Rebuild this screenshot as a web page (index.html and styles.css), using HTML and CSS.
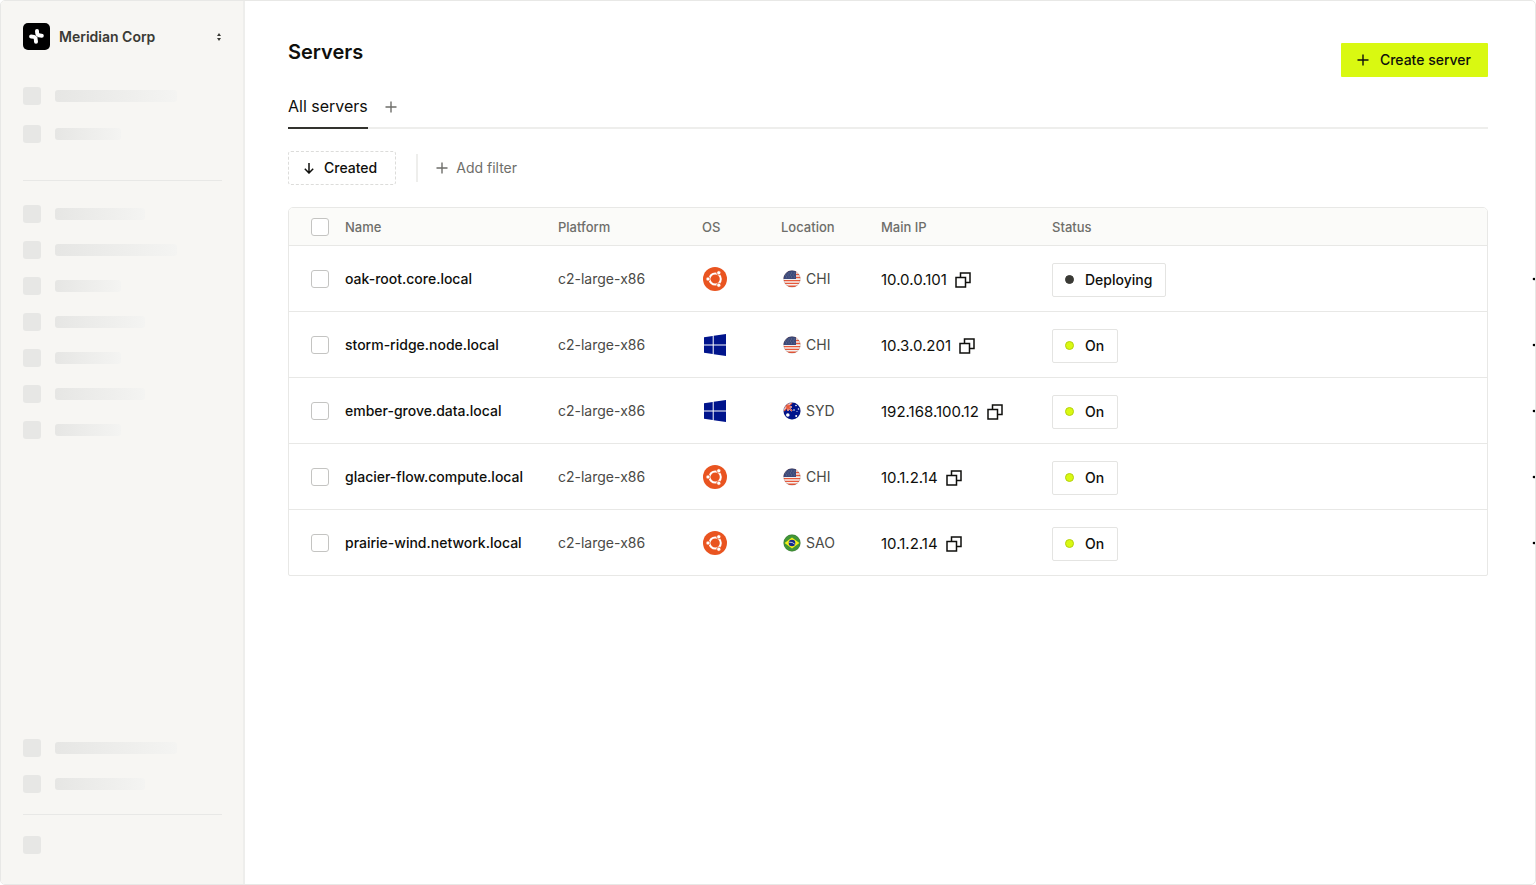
FILE: index.html
```
<!DOCTYPE html>
<html lang="en">
<head>
    <meta charset="UTF-8">
    <meta name="viewport" content="width=device-width, initial-scale=1">
    <title>Servers</title>
    <link rel="stylesheet" href="styles.css">
</head>
<body>
    <!-- shared icons -->
    <svg class="sprite" aria-hidden="true">
        <symbol id="plus" viewBox="0 0 12 12">
            <path d="M6 .5v11M.5 6h11" fill="none" stroke="currentColor" stroke-width="1.4"/>
        </symbol>
        <symbol id="copy" viewBox="0 0 16 16">
            <path d="M1 5.5h9.5V15H1zM5.5 5.5V1H15v9.5h-4.5" fill="none" stroke="currentColor" stroke-width="1.5"/>
        </symbol>
        <symbol id="more" viewBox="0 0 16 4">
            <circle cx="2" cy="2" r="1.3"/><circle cx="8" cy="2" r="1.3"/><circle cx="14" cy="2" r="1.3"/>
        </symbol>
        <symbol id="ubuntu" viewBox="0 0 24 24">
            <circle cx="12" cy="12" r="12" fill="#e95420"/>
            <circle cx="12.2" cy="12" r="5.6" fill="none" stroke="#fff" stroke-width="2"/>
            <g fill="#fff" stroke="#e95420" stroke-width=".8">
                <circle cx="5" cy="12" r="2.1"/>
                <circle cx="15.8" cy="5.8" r="2.1"/>
                <circle cx="15.8" cy="18.2" r="2.1"/>
            </g>
        </symbol>
        <symbol id="windows" viewBox="0 0 22 22">
            <path d="M0 3.2 8.7 2v8.5H0zM9.7 1.8 22 0v10.5H9.7zM0 11.5h8.7V20L0 18.8zM9.7 11.5H22V22L9.7 20.2z" fill="#00148c"/>
        </symbol>
        <clipPath id="round"><circle cx="9" cy="9" r="8.5"/></clipPath>
        <symbol id="us" viewBox="0 0 18 18">
            <g clip-path="url(#round)">
                <path d="M0 0h18v18H0z" fill="#f5f0ef"/>
                <path d="M0 1.5h18M0 4.5h18M0 7.5h18M0 10.6h18M0 13.4h18M0 16.3h18" stroke="#e8583a" stroke-width="1.4"/>
                <path d="M0 0h13v9H0z" fill="#3c4a7c"/>
                <path d="M3 3h10M2 5h10M3 7h10" stroke="#8c8f96" stroke-width=".7" stroke-dasharray=".8 1.8"/>
            </g>
            <circle cx="9" cy="9" r="8.3" fill="none" stroke="#000" stroke-opacity=".2" stroke-width=".6"/>
        </symbol>
        <symbol id="au" viewBox="0 0 18 18">
            <g clip-path="url(#round)">
                <path d="M0 0h18v18H0z" fill="#00148c"/>
                <path d="M0 0l9 9M9 0 0 9M5 0v9M0 5h9" stroke="#fff" stroke-width="1.6"/>
                <path d="M1 1l8 8M9 1 1 9M5 0v9M0 5h9" stroke="#e8583a" stroke-width="1.2"/>
                <g fill="#fff">
                    <circle cx="4.8" cy="13" r="1.8"/><circle cx="13" cy="3.5" r=".8"/><circle cx="11" cy="8" r=".8"/>
                    <circle cx="15.5" cy="7" r=".8"/><circle cx="13.2" cy="14" r="1"/><circle cx="14" cy="9.5" r=".5"/>
                </g>
            </g>
            <circle cx="9" cy="9" r="8.3" fill="none" stroke="#000" stroke-opacity=".2" stroke-width=".6"/>
        </symbol>
        <symbol id="br" viewBox="0 0 18 18">
            <circle cx="9" cy="9" r="8.5" fill="#419637"/>
            <path d="M9 3.4 16.4 9 9 14.6 1.6 9z" fill="#f4f01b"/>
            <circle cx="9" cy="9" r="3.3" fill="#162a8c"/>
            <path d="M6 8.2q3.5-.4 5.8 2" fill="none" stroke="#fff" stroke-width=".7"/>
            <circle cx="9" cy="9" r="8.3" fill="none" stroke="#000" stroke-opacity=".2" stroke-width=".6"/>
        </symbol>
    </svg>

    <div class="app">
        <aside class="sidebar">
            <button class="org" type="button">
                <svg class="org-logo" viewBox="0 0 27 27" aria-hidden="true">
                    <rect width="27" height="27" rx="5"/>
                    <g fill="none" stroke="#fff" stroke-width="4" stroke-linecap="round">
                        <path d="M14 7.9C14 11.5 14.5 12.7 18.8 12.7"/>
                        <path d="M8.1 13.4C12.3 13.4 13 14.8 13 18.8"/>
                    </g>
                    <path d="M12 12 15 15" stroke="#999" stroke-width=".6"/>
                </svg>
                <span class="org-name">Meridian Corp</span>
                <svg class="org-arrows" viewBox="0 0 6 10" aria-hidden="true">
                    <path d="M3 1 5 4H1zM3 9 1 6h4z" fill="#3a3a35"/>
                </svg>
            </button>
            <div class="nav-group top">
                <div class="nav-item"><i class="box"></i><i class="bar long"></i></div>
                <div class="nav-item"><i class="box"></i><i class="bar short"></i></div>
            </div>
            <div class="nav-group">
                <div class="nav-item"><i class="box"></i><i class="bar medium"></i></div>
                <div class="nav-item"><i class="box"></i><i class="bar long"></i></div>
                <div class="nav-item"><i class="box"></i><i class="bar short"></i></div>
                <div class="nav-item"><i class="box"></i><i class="bar medium"></i></div>
                <div class="nav-item"><i class="box"></i><i class="bar short"></i></div>
                <div class="nav-item"><i class="box"></i><i class="bar medium"></i></div>
                <div class="nav-item"><i class="box"></i><i class="bar short"></i></div>
            </div>
            <div class="nav-group bottom">
                <div class="nav-item"><i class="box"></i><i class="bar long"></i></div>
                <div class="nav-item"><i class="box"></i><i class="bar medium"></i></div>
            </div>
            <div class="nav-group user">
                <div class="nav-item"><i class="box"></i></div>
            </div>
        </aside>

        <main>
            <header>
                <h1>Servers</h1>
                <button class="create" type="button"><svg class="icon"><use href="#plus"/></svg>Create server</button>
            </header>
            <nav class="tabs">
                <a class="tab" href="#">All servers</a>
                <button class="add-tab" type="button" aria-label="Add view"><svg class="icon"><use href="#plus"/></svg></button>
            </nav>
            <div class="filters">
                <button class="sort" type="button">
                    <svg class="icon" viewBox="0 0 12 12"><path d="M6 1v10M1.8 6.8 6 11l4.2-4.2" fill="none" stroke="currentColor" stroke-width="1.5"/></svg>Created
                </button>
                <button class="add-filter" type="button"><svg class="icon"><use href="#plus"/></svg>Add filter</button>
            </div>

            <table>
                <colgroup>
                    <col class="col-check"><col class="col-name"><col class="col-platform"><col class="col-os">
                    <col class="col-location"><col class="col-ip"><col>
                </colgroup>
                <thead>
                    <tr>
                        <th class="check"><input type="checkbox" aria-label="Select all servers"></th>
                        <th>Name</th>
                        <th>Platform</th>
                        <th>OS</th>
                        <th>Location</th>
                        <th>Main IP</th>
                        <th>Status</th>
                    </tr>
                </thead>
                <tbody>
                    <tr>
                        <td class="check"><input type="checkbox" aria-label="Select oak-root.core.local"></td>
                        <td class="name">oak-root.core.local</td>
                        <td>c2-large-x86</td>
                        <td><svg class="os" role="img" aria-label="Ubuntu"><use href="#ubuntu"/></svg></td>
                        <td><span class="location"><svg class="flag"><use href="#us"/></svg>CHI</span></td>
                        <td><span class="ip">10.0.0.101 <button class="copy" type="button" aria-label="Copy IP"><svg><use href="#copy"/></svg></button></span></td>
                        <td class="last"><span class="status"><i class="dot deploying"></i>Deploying</span>
                            <button class="more" type="button" aria-label="More actions"><svg><use href="#more"/></svg></button></td>
                    </tr>
                    <tr>
                        <td class="check"><input type="checkbox" aria-label="Select storm-ridge.node.local"></td>
                        <td class="name">storm-ridge.node.local</td>
                        <td>c2-large-x86</td>
                        <td><svg class="os win" role="img" aria-label="Windows"><use href="#windows"/></svg></td>
                        <td><span class="location"><svg class="flag"><use href="#us"/></svg>CHI</span></td>
                        <td><span class="ip">10.3.0.201 <button class="copy" type="button" aria-label="Copy IP"><svg><use href="#copy"/></svg></button></span></td>
                        <td class="last"><span class="status"><i class="dot"></i>On</span>
                            <button class="more" type="button" aria-label="More actions"><svg><use href="#more"/></svg></button></td>
                    </tr>
                    <tr>
                        <td class="check"><input type="checkbox" aria-label="Select ember-grove.data.local"></td>
                        <td class="name">ember-grove.data.local</td>
                        <td>c2-large-x86</td>
                        <td><svg class="os win" role="img" aria-label="Windows"><use href="#windows"/></svg></td>
                        <td><span class="location"><svg class="flag"><use href="#au"/></svg>SYD</span></td>
                        <td><span class="ip">192.168.100.12 <button class="copy" type="button" aria-label="Copy IP"><svg><use href="#copy"/></svg></button></span></td>
                        <td class="last"><span class="status"><i class="dot"></i>On</span>
                            <button class="more" type="button" aria-label="More actions"><svg><use href="#more"/></svg></button></td>
                    </tr>
                    <tr>
                        <td class="check"><input type="checkbox" aria-label="Select glacier-flow.compute.local"></td>
                        <td class="name">glacier-flow.compute.local</td>
                        <td>c2-large-x86</td>
                        <td><svg class="os" role="img" aria-label="Ubuntu"><use href="#ubuntu"/></svg></td>
                        <td><span class="location"><svg class="flag"><use href="#us"/></svg>CHI</span></td>
                        <td><span class="ip">10.1.2.14 <button class="copy" type="button" aria-label="Copy IP"><svg><use href="#copy"/></svg></button></span></td>
                        <td class="last"><span class="status"><i class="dot"></i>On</span>
                            <button class="more" type="button" aria-label="More actions"><svg><use href="#more"/></svg></button></td>
                    </tr>
                    <tr>
                        <td class="check"><input type="checkbox" aria-label="Select prairie-wind.network.local"></td>
                        <td class="name">prairie-wind.network.local</td>
                        <td>c2-large-x86</td>
                        <td><svg class="os" role="img" aria-label="Ubuntu"><use href="#ubuntu"/></svg></td>
                        <td><span class="location"><svg class="flag"><use href="#br"/></svg>SAO</span></td>
                        <td><span class="ip">10.1.2.14 <button class="copy" type="button" aria-label="Copy IP"><svg><use href="#copy"/></svg></button></span></td>
                        <td class="last"><span class="status"><i class="dot"></i>On</span>
                            <button class="more" type="button" aria-label="More actions"><svg><use href="#more"/></svg></button></td>
                    </tr>
                </tbody>
            </table>
        </main>
    </div>
</body>
</html>
```
FILE: styles.css
```
* {
    box-sizing: border-box;
}
body {
    margin: 0;
    background-color: #fff;
    color: #0f0f0c;
    font-family: Inter, sans-serif;
    font-size: 14px;
    line-height: 20px;
}
button {
    display: flex;
    align-items: center;
    padding: 0;
    border: none;
    background: none;
    color: inherit;
    font: inherit;
    cursor: pointer;
}
svg {
    display: block;
}
.sprite {
    position: absolute;
    width: 0;
    height: 0;
}
.icon {
    width: 12px;
    height: 12px;
}
.app {
    display: flex;
    min-height: 100vh;
    border: 1px solid #e8e8e6;
    border-radius: 5px;
    overflow: hidden;
}

/* sidebar */
.sidebar {
    display: flex;
    flex-direction: column;
    flex: none;
    width: 244px;
    padding: 22px 21px 22px 22px;
    background-color: #f7f6f3;
    border-right: 2px solid #eeeeec;
}
.org {
    gap: 9px;
    margin-bottom: 37px;
    color: #3a3a35;
    font-weight: 600;
    text-align: left;
}
.org-logo {
    width: 27px;
    height: 27px;
}
.org-name {
    flex: 1;
}
.org-arrows {
    width: 6px;
    height: 10px;
}
.nav-group {
    display: flex;
    flex-direction: column;
    gap: 18px;
}
.nav-group.top {
    gap: 20px;
    margin-bottom: 24px;
    padding-bottom: 37px;
    border-bottom: 1px solid #e8e8e6;
}
.nav-group.bottom {
    margin-top: auto;
    padding-bottom: 21px;
    border-bottom: 1px solid #e8e8e6;
}
.nav-group.user {
    padding: 21px 0 8px;
}
.nav-item {
    display: flex;
    align-items: center;
    gap: 14px;
    height: 18px;
}
.box {
    width: 18px;
    height: 18px;
    border-radius: 3px;
    background-color: #e7e7e5;
}
.bar {
    height: 12px;
    border-radius: 3px;
    background: linear-gradient(to right, #e6e6e4, #f4f4f2);
}
.bar.long {
    width: 122px;
}
.bar.medium {
    width: 90px;
}
.bar.short {
    width: 66px;
}

/* main area */
main {
    flex: 1;
    min-width: 0;
    padding: 40px 47px 40px 43px;
}
header {
    display: flex;
    justify-content: space-between;
    align-items: flex-start;
}
h1 {
    margin: 0;
    font-size: 20px;
    line-height: 22px;
    font-weight: 600;
}
.create {
    gap: 11px;
    height: 34px;
    margin-top: 2px;
    padding: 0 17px 0 16px;
    border-radius: 1px;
    background-color: #d9f911;
    font-weight: 500;
}
.tabs {
    display: flex;
    align-items: flex-start;
    gap: 17px;
    height: 52px;
    border-bottom: 2px solid #eeeeec;
}
.tab {
    height: 52px;
    padding-top: 19px;
    border-bottom: 2px solid #33332e;
    color: #0f0f0c;
    font-size: 16px;
    text-decoration: none;
}
.add-tab {
    margin-top: 24px;
    color: #6e6e6a;
}
.filters {
    display: flex;
    align-items: center;
    gap: 20px;
    margin: 22px 0;
}
.sort {
    gap: 9px;
    height: 34px;
    padding: 0 18px 0 14px;
    border: 1px dashed #dcdcda;
    border-radius: 3px;
    font-weight: 500;
}
.add-filter {
    gap: 8px;
    height: 28px;
    padding-left: 18px;
    border-left: 2px solid #eeeeec;
    color: #6e6e6a;
}

/* servers table */
table {
    width: 100%;
    table-layout: fixed;
    border: 1px solid #e8e8e6;
    border-radius: 5px 5px 2px 2px;
    border-spacing: 0;
}
.col-check {
    width: 56px;
}
.col-name {
    width: 213px;
}
.col-platform {
    width: 144px;
}
.col-os {
    width: 79px;
}
.col-location {
    width: 100px;
}
.col-ip {
    width: 171px;
}
th {
    height: 37px;
    padding: 0;
    background-color: #fbfbf9;
    color: #6e6e6a;
    font-size: 13px;
    font-weight: 500;
    text-align: left;
}
th:first-child {
    border-top-left-radius: 4px;
}
th:last-child {
    border-top-right-radius: 4px;
}
td {
    height: 66px;
    padding: 0;
    border-top: 1px solid #e8e8e6;
    color: #4a4a46;
    white-space: nowrap;
}
.check {
    padding-left: 22px;
}
.check input {
    display: block;
    width: 18px;
    height: 18px;
    margin: 0;
    appearance: none;
    border: 1px solid #c4c4c2;
    border-radius: 3px;
    background-color: #fff;
}
.name {
    color: #0f0f0c;
    font-weight: 500;
}
.os {
    width: 24px;
    height: 24px;
    margin-left: 1px;
}
.os.win {
    width: 22px;
    height: 22px;
    margin-left: 2px;
}
.location {
    display: flex;
    align-items: center;
    gap: 5px;
    padding-left: 2px;
}
.flag {
    width: 18px;
    height: 18px;
}
.ip {
    display: flex;
    align-items: center;
    gap: 8px;
    padding-top: 3px;
    color: #0f0f0c;
    font-size: 15px;
}
.copy svg {
    width: 16px;
    height: 16px;
}
.last {
    position: relative;
}
.status {
    display: inline-flex;
    align-items: center;
    gap: 11px;
    height: 34px;
    margin-top: 2px;
    padding: 0 13px 0 12px;
    border: 1px solid #e4e4e2;
    border-radius: 2px;
    color: #0f0f0c;
    font-weight: 500;
}
.dot {
    width: 9px;
    height: 9px;
    border: 1px solid #b4d010;
    border-radius: 50%;
    background-color: #d9f911;
}
.dot.deploying {
    border-color: #3a3a35;
    background-color: #3a3a35;
}
/* row menu hangs past the table's right edge */
.more {
    position: absolute;
    top: 31px;
    left: 100%;
    margin-left: 45px;
}
.more svg {
    width: 16px;
    height: 4px;
}
```
